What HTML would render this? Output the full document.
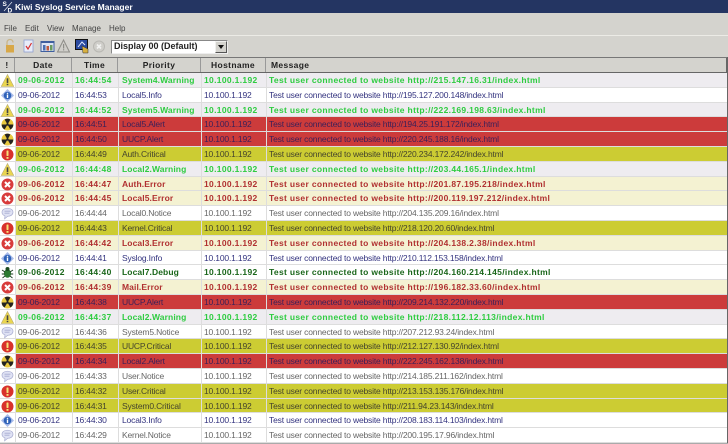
<!DOCTYPE html>
<html><head><meta charset="utf-8"><style>
html,body{margin:0;padding:0}
body{width:728px;height:444px;overflow:hidden;background:#d4d3ce;position:relative;font-family:"Liberation Sans",sans-serif;font-size:8.5px;filter:blur(.25px)}
.a{position:absolute;white-space:nowrap}
.tb{left:0;top:0;width:728px;height:13px;background:#243562}
.tt{left:15px;top:0;line-height:15px;color:#fff;font-weight:bold;font-size:8.5px}
.m{top:22px;line-height:13px;color:#444;font-size:8px}
.h{top:57px;background:#d4d3ce;border-top:1px solid #777;border-bottom:1px solid #666;left:0;width:728px;height:14px}
.hc{position:absolute;top:0;height:14px;line-height:15px;font-weight:bold;color:#222;text-align:center;border-right:1px solid #999;box-sizing:border-box;font-size:8.5px;letter-spacing:.35px}
.r{position:absolute;left:0;width:727px;height:14.8px;line-height:14.6px;border-bottom:1px solid #ddd;box-sizing:border-box}
.r span{position:absolute;top:0;white-space:nowrap;letter-spacing:-.17px}
.bg{position:absolute;left:15px;right:0;top:0;bottom:0}
.r svg{position:absolute;left:1px;top:1px;width:13px;height:13px}
.c1{left:18px}.c2{left:75px}.c3{left:122px}.c4{left:204px}.c5{left:269px}
.W .bg{background:#eeecf0}.W span{color:#2ecc40;font-weight:bold;letter-spacing:.33px}
.I .bg{background:#fff}.I span{color:#33337f}
.A .bg{background:#cc3b3b}.A span{color:#3c2058}
.C .bg{background:#cccc33}.C span{color:#44442c}
.E .bg{background:#f4f2d2}.E span{color:#b03030;font-weight:bold;letter-spacing:.33px}
.N .bg{background:#fff}.N span{color:#666}
.D .bg{background:#fff}.D span{color:#1a661a;font-weight:bold;letter-spacing:.33px}
.W .c3,.E .c3,.D .c3{letter-spacing:.1px}
</style></head><body>
<svg width="0" height="0" style="position:absolute"><defs>
<symbol id="w" viewBox="0 0 13 13"><path d="M6.500 .5L12.800 12.500H.2Z" fill="#ead650" stroke="#b8aa70" stroke-width=".6"/><rect x="5.700" y="4.300" width="1.600" height="4.700" fill="#444"/><rect x="5.700" y="9.800" width="1.600" height="1.400" fill="#444"/></symbol>
<symbol id="i" viewBox="0 0 13 13"><path d="M6.500 0L13 6.500L6.500 13L0 6.500Z" fill="#a9bcea"/><circle cx="6.500" cy="6.500" r="3.800" fill="#2f62b8"/><rect x="5.800" y="5.500" width="1.400" height="3.500" fill="#fff"/><rect x="5.800" y="3.800" width="1.400" height="1.100" fill="#fff"/></symbol>
<symbol id="a" viewBox="0 0 13 13"><circle cx="6.500" cy="6.500" r="6" fill="#e8c840"/><path d="M6.500 6.500L3.600 1.500A5.800 5.800 0 0 1 9.400 1.500ZM6.500 6.500L12.300 6.500A5.800 5.800 0 0 1 9.400 11.500ZM6.500 6.500L3.600 11.500A5.800 5.800 0 0 1 .7 6.500Z" fill="#222"/><circle cx="6.500" cy="6.500" r="1.200" fill="#222"/></symbol>
<symbol id="c" viewBox="0 0 13 13"><circle cx="6.500" cy="6.500" r="6" fill="#d8322c"/><rect x="5.500" y="2.500" width="2" height="5.500" rx=".6" fill="#f6e27a"/><rect x="5.500" y="9" width="2" height="1.800" fill="#f6e27a"/></symbol>
<symbol id="e" viewBox="0 0 13 13"><circle cx="6.500" cy="6.500" r="6" fill="#d83c3c"/><path d="M4 4L9 9M9 4L4 9" stroke="#fff" stroke-width="2"/></symbol>
<symbol id="n" viewBox="0 0 13 13"><path d="M6.500 1.200C3.200 1.200 1 3 1 5.300C1 7 2.200 8.300 4 8.900L3.600 11.800L6.600 9.300C9.800 9.300 12 7.600 12 5.300C12 3 9.800 1.200 6.500 1.200Z" fill="#dfe2f4" stroke="#a8acd0" stroke-width=".7"/><path d="M3.500 4.200H9.500M3.500 6.200H8.500" stroke="#a8acd0" stroke-width=".8"/></symbol>
<symbol id="d" viewBox="0 0 13 13"><ellipse cx="6.500" cy="7.500" rx="3.600" ry="4.300" fill="#2c7a30"/><circle cx="6.500" cy="3" r="2" fill="#1c4a20"/><path d="M1 4L4 6M12 4L9 6M.8 8H3.500M12.200 8H9.500M1.500 12L4 10M11.500 12L9 10" stroke="#1c3a20" stroke-width=".9"/></symbol>
</defs></svg>

<div class="a tb"></div>
<svg class="a" style="left:1px;top:0" width="13" height="13" viewBox="0 0 13 13"><path d="M3 11L11 2" stroke="#dfe6f0" stroke-width=".7"/><text x="1.500" y="6" font-size="6.500" font-weight="bold" fill="#fff" font-family="Liberation Sans">S</text><text x="6.500" y="12.500" font-size="6.500" font-weight="bold" fill="#fff" font-family="Liberation Sans">D</text></svg>
<div class="a tt">Kiwi Syslog Service Manager</div>

<div class="a m" style="left:4px">File</div>
<div class="a m" style="left:25px">Edit</div>
<div class="a m" style="left:47px">View</div>
<div class="a m" style="left:72px">Manage</div>
<div class="a m" style="left:109px">Help</div>
<div class="a" style="left:0;top:35px;width:728px;height:1px;background:#ecebe6"></div>

<svg class="a" style="left:4px;top:38px" width="110" height="16" viewBox="0 0 110 16">
<path d="M3 7V4.500C3 2.500 4.500 1.500 6 1.500S9 2.500 9 4.500" fill="none" stroke="#c9b68a" stroke-width="1.300"/><rect x="2" y="7" width="8" height="7.500" fill="#d8a848"/>
<rect x="20" y="2" width="9" height="12" fill="#e8ecf8" stroke="#8f9fd0" stroke-width=".8"/><path d="M22 8L24 11L27.500 5" stroke="#d83030" stroke-width="1.200" fill="none"/>
<rect x="37" y="3.500" width="13" height="10" fill="#dde4f4" stroke="#3f5f9f"/><rect x="37" y="3" width="13" height="2" fill="#3f5f9f"/><rect x="39" y="7" width="2.500" height="5.500" fill="#4a6fb0"/><rect x="42.500" y="8" width="2.500" height="4.500" fill="#c05a40"/><rect x="46" y="7" width="2.500" height="5.500" fill="#6a9a60"/>
<path d="M59.500 2L65.500 14H53.500Z" fill="#d0cfca" stroke="#8e8d88"/><rect x="59" y="6" width="1.200" height="4.500" fill="#8e8d88"/><rect x="59" y="11.200" width="1.200" height="1.200" fill="#8e8d88"/>
<rect x="71.500" y="1.500" width="12" height="10" fill="#2a4aa0" stroke="#111"/><path d="M74 9L78 4L81 7" stroke="#dfe8ff" fill="none"/><path d="M78 8L84 11V15H79Z" fill="#d8b040" stroke="#333" stroke-width=".5"/>
<circle cx="95" cy="8.500" r="5.500" fill="#cfcec9" stroke="#b9b8b3"/><path d="M93 6.500L97 10.500M97 6.500L93 10.500" stroke="#f2f2f0" stroke-width="1.600"/>
</svg>

<div class="a" style="left:111px;top:40px;width:117px;height:14px;background:#fff;border:1px solid;border-color:#888 #eee #eee #888;box-sizing:border-box"></div>
<div class="a" style="left:114px;top:39px;line-height:15px;font-size:9px;font-weight:bold;color:#222;">Display 00 (Default)</div>
<div class="a" style="left:215px;top:41px;width:12px;height:12px;background:#d4d3ce;border:1px solid;border-color:#f0f0ee #555 #555 #f0f0ee;box-sizing:border-box"></div>
<div class="a" style="left:218px;top:45px;width:0;height:0;border:3px solid transparent;border-top:4px solid #111;border-bottom:0"></div>

<div class="a h">
<div class="hc" style="left:0;width:15px;">!</div>
<div class="hc" style="left:15px;width:57px">Date</div>
<div class="hc" style="left:72px;width:46px">Time</div>
<div class="hc" style="left:118px;width:83px">Priority</div>
<div class="hc" style="left:201px;width:65px">Hostname</div>
<div class="hc" style="left:266px;width:462px;text-align:left;padding-left:5px;border-right:2px solid #666">Message</div>
</div>

<div class="a" style="left:0;top:73px;width:15px;height:371px;background:#fff"></div>

<div class="r W" style="top:73px"><div class="bg"></div><svg><use href="#w"/></svg><span class="c1">09-06-2012</span><span class="c2">16:44:54</span><span class="c3">System4.Warning</span><span class="c4">10.100.1.192</span><span class="c5">Test user connected to website http://215.147.16.31/index.html</span></div>
<div class="r I" style="top:87.8px"><div class="bg"></div><svg><use href="#i"/></svg><span class="c1">09-06-2012</span><span class="c2">16:44:53</span><span class="c3">Local5.Info</span><span class="c4">10.100.1.192</span><span class="c5">Test user connected to website http://195.127.200.148/index.html</span></div>
<div class="r W" style="top:102.6px"><div class="bg"></div><svg><use href="#w"/></svg><span class="c1">09-06-2012</span><span class="c2">16:44:52</span><span class="c3">System5.Warning</span><span class="c4">10.100.1.192</span><span class="c5">Test user connected to website http://222.169.198.63/index.html</span></div>
<div class="r A" style="top:117.4px"><div class="bg"></div><svg><use href="#a"/></svg><span class="c1">09-06-2012</span><span class="c2">16:44:51</span><span class="c3">Local5.Alert</span><span class="c4">10.100.1.192</span><span class="c5">Test user connected to website http://194.25.191.172/index.html</span></div>
<div class="r A" style="top:132.2px"><div class="bg"></div><svg><use href="#a"/></svg><span class="c1">09-06-2012</span><span class="c2">16:44:50</span><span class="c3">UUCP.Alert</span><span class="c4">10.100.1.192</span><span class="c5">Test user connected to website http://220.245.188.16/index.html</span></div>
<div class="r C" style="top:147px"><div class="bg"></div><svg><use href="#c"/></svg><span class="c1">09-06-2012</span><span class="c2">16:44:49</span><span class="c3">Auth.Critical</span><span class="c4">10.100.1.192</span><span class="c5">Test user connected to website http://220.234.172.242/index.html</span></div>
<div class="r W" style="top:161.8px"><div class="bg"></div><svg><use href="#w"/></svg><span class="c1">09-06-2012</span><span class="c2">16:44:48</span><span class="c3">Local2.Warning</span><span class="c4">10.100.1.192</span><span class="c5">Test user connected to website http://203.44.165.1/index.html</span></div>
<div class="r E" style="top:176.6px"><div class="bg"></div><svg><use href="#e"/></svg><span class="c1">09-06-2012</span><span class="c2">16:44:47</span><span class="c3">Auth.Error</span><span class="c4">10.100.1.192</span><span class="c5">Test user connected to website http://201.87.195.218/index.html</span></div>
<div class="r E" style="top:191.4px"><div class="bg"></div><svg><use href="#e"/></svg><span class="c1">09-06-2012</span><span class="c2">16:44:45</span><span class="c3">Local5.Error</span><span class="c4">10.100.1.192</span><span class="c5">Test user connected to website http://200.119.197.212/index.html</span></div>
<div class="r N" style="top:206.2px"><div class="bg"></div><svg><use href="#n"/></svg><span class="c1">09-06-2012</span><span class="c2">16:44:44</span><span class="c3">Local0.Notice</span><span class="c4">10.100.1.192</span><span class="c5">Test user connected to website http://204.135.209.16/index.html</span></div>
<div class="r C" style="top:221px"><div class="bg"></div><svg><use href="#c"/></svg><span class="c1">09-06-2012</span><span class="c2">16:44:43</span><span class="c3">Kernel.Critical</span><span class="c4">10.100.1.192</span><span class="c5">Test user connected to website http://218.120.20.60/index.html</span></div>
<div class="r E" style="top:235.8px"><div class="bg"></div><svg><use href="#e"/></svg><span class="c1">09-06-2012</span><span class="c2">16:44:42</span><span class="c3">Local3.Error</span><span class="c4">10.100.1.192</span><span class="c5">Test user connected to website http://204.138.2.38/index.html</span></div>
<div class="r I" style="top:250.6px"><div class="bg"></div><svg><use href="#i"/></svg><span class="c1">09-06-2012</span><span class="c2">16:44:41</span><span class="c3">Syslog.Info</span><span class="c4">10.100.1.192</span><span class="c5">Test user connected to website http://210.112.153.158/index.html</span></div>
<div class="r D" style="top:265.4px"><div class="bg"></div><svg><use href="#d"/></svg><span class="c1">09-06-2012</span><span class="c2">16:44:40</span><span class="c3">Local7.Debug</span><span class="c4">10.100.1.192</span><span class="c5">Test user connected to website http://204.160.214.145/index.html</span></div>
<div class="r E" style="top:280.2px"><div class="bg"></div><svg><use href="#e"/></svg><span class="c1">09-06-2012</span><span class="c2">16:44:39</span><span class="c3">Mail.Error</span><span class="c4">10.100.1.192</span><span class="c5">Test user connected to website http://196.182.33.60/index.html</span></div>
<div class="r A" style="top:295px"><div class="bg"></div><svg><use href="#a"/></svg><span class="c1">09-06-2012</span><span class="c2">16:44:38</span><span class="c3">UUCP.Alert</span><span class="c4">10.100.1.192</span><span class="c5">Test user connected to website http://209.214.132.220/index.html</span></div>
<div class="r W" style="top:309.8px"><div class="bg"></div><svg><use href="#w"/></svg><span class="c1">09-06-2012</span><span class="c2">16:44:37</span><span class="c3">Local2.Warning</span><span class="c4">10.100.1.192</span><span class="c5">Test user connected to website http://218.112.12.113/index.html</span></div>
<div class="r N" style="top:324.6px"><div class="bg"></div><svg><use href="#n"/></svg><span class="c1">09-06-2012</span><span class="c2">16:44:36</span><span class="c3">System5.Notice</span><span class="c4">10.100.1.192</span><span class="c5">Test user connected to website http://207.212.93.24/index.html</span></div>
<div class="r C" style="top:339.4px"><div class="bg"></div><svg><use href="#c"/></svg><span class="c1">09-06-2012</span><span class="c2">16:44:35</span><span class="c3">UUCP.Critical</span><span class="c4">10.100.1.192</span><span class="c5">Test user connected to website http://212.127.130.92/index.html</span></div>
<div class="r A" style="top:354.2px"><div class="bg"></div><svg><use href="#a"/></svg><span class="c1">09-06-2012</span><span class="c2">16:44:34</span><span class="c3">Local2.Alert</span><span class="c4">10.100.1.192</span><span class="c5">Test user connected to website http://222.245.162.138/index.html</span></div>
<div class="r N" style="top:369px"><div class="bg"></div><svg><use href="#n"/></svg><span class="c1">09-06-2012</span><span class="c2">16:44:33</span><span class="c3">User.Notice</span><span class="c4">10.100.1.192</span><span class="c5">Test user connected to website http://214.185.211.162/index.html</span></div>
<div class="r C" style="top:383.8px"><div class="bg"></div><svg><use href="#c"/></svg><span class="c1">09-06-2012</span><span class="c2">16:44:32</span><span class="c3">User.Critical</span><span class="c4">10.100.1.192</span><span class="c5">Test user connected to website http://213.153.135.176/index.html</span></div>
<div class="r C" style="top:398.6px"><div class="bg"></div><svg><use href="#c"/></svg><span class="c1">09-06-2012</span><span class="c2">16:44:31</span><span class="c3">System0.Critical</span><span class="c4">10.100.1.192</span><span class="c5">Test user connected to website http://211.94.23.143/index.html</span></div>
<div class="r I" style="top:413.4px"><div class="bg"></div><svg><use href="#i"/></svg><span class="c1">09-06-2012</span><span class="c2">16:44:30</span><span class="c3">Local3.Info</span><span class="c4">10.100.1.192</span><span class="c5">Test user connected to website http://208.183.114.103/index.html</span></div>
<div class="r N" style="top:428.2px"><div class="bg"></div><svg><use href="#n"/></svg><span class="c1">09-06-2012</span><span class="c2">16:44:29</span><span class="c3">Kernel.Notice</span><span class="c4">10.100.1.192</span><span class="c5">Test user connected to website http://200.195.17.96/index.html</span></div>

<div class="a" style="left:15px;top:73px;width:1px;height:371px;background:#ddd"></div>
<div class="a" style="left:71.500px;top:73px;width:1px;height:371px;background:#ddd"></div>
<div class="a" style="left:118px;top:73px;width:1px;height:371px;background:#ddd"></div>
<div class="a" style="left:200.500px;top:73px;width:1px;height:371px;background:#ddd"></div>
<div class="a" style="left:265.500px;top:73px;width:1px;height:371px;background:#ddd"></div>
<div class="a" style="left:727px;top:57px;width:1px;height:387px;background:#666"></div>
<div class="a" style="left:0;top:443px;width:728px;height:1px;background:#aaa"></div>
</body></html>
